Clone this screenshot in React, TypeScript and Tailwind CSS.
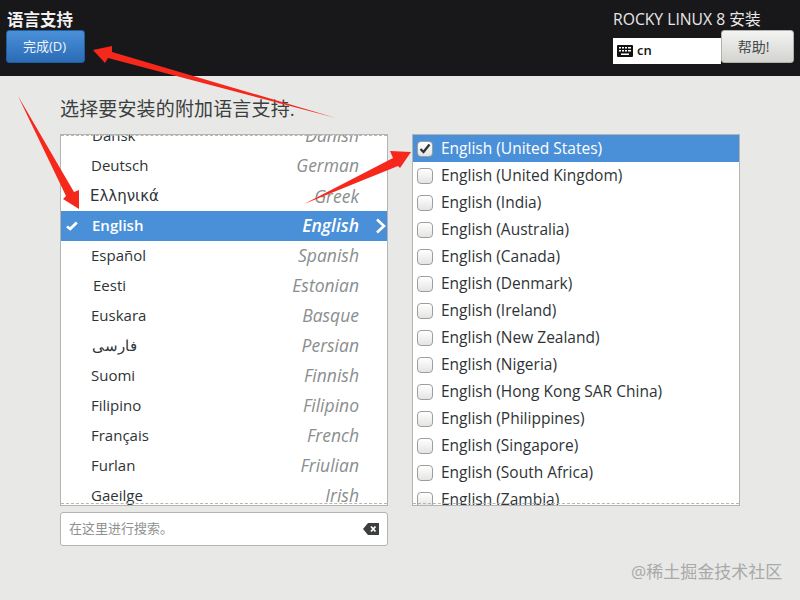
import React from "react";

const FONT = "[font-family:'Open_Sans','Noto_Sans_CJK_SC',sans-serif]";

const langs: [string, string, string][] = [
  ["Dansk", "Danish", "pl-[31px] pb-[2px]"],
  ["Deutsch", "German", "pl-[30px] pb-[2px]"],
  ["Ελληνικά", "Greek", "pl-[29px] pb-[0px] [font-family:'DejaVu_Sans',sans-serif]"],
  ["English", "English", "pl-[31px] pb-[2px]"],
  ["Español", "Spanish", "pl-[30px] pb-[2px]"],
  ["Eesti", "Estonian", "pl-[32px] pb-[2px]"],
  ["Euskara", "Basque", "pl-[30px] pb-[2px]"],
  ["فارسی", "Persian", "pl-[31px] pb-[2px]"],
  ["Suomi", "Finnish", "pl-[30px] pb-[2px]"],
  ["Filipino", "Filipino", "pl-[30px] pb-[2px]"],
  ["Français", "French", "pl-[30px] pb-[2px]"],
  ["Furlan", "Friulian", "pl-[30px] pb-[2px]"],
  ["Gaeilge", "Irish", "pl-[30px] pb-[2px]"],
];

const locales = [
  "United States",
  "United Kingdom",
  "India",
  "Australia",
  "Canada",
  "Denmark",
  "Ireland",
  "New Zealand",
  "Nigeria",
  "Hong Kong SAR China",
  "Philippines",
  "Singapore",
  "South Africa",
  "Zambia",
];

function LangRow({ name, en, cls }: { name: string; en: string; cls: string }) {
  const active = name === "English";
  return (
    <div
      className={`h-[30px] flex items-center pr-[28px] text-[15px] relative ${cls} ${
        active ? "bg-[#4a90d9] text-white font-semibold" : "text-[#2e3436]"
      }`}
    >
      {active && (
        <svg className="absolute left-[5px] top-[10px]" width="12" height="10" viewBox="0 0 12 10">
          <path d="M1 5.5 L4.2 8 L10.8 1.5" fill="none" stroke="white" strokeWidth="2.8" />
        </svg>
      )}
      <span className="flex-1">{name}</span>
      <span className={`italic text-[17.5px] [font-family:'Open_Sans',sans-serif] ${active ? "text-white" : "text-[#8a8e8e]"}`}>{en}</span>
      {active && (
        <svg className="absolute right-[1px] top-[7px]" width="11" height="16" viewBox="0 0 11 16">
          <path d="M2 1.5 L9 8 L2 14.5" fill="none" stroke="white" strokeWidth="2.6" />
        </svg>
      )}
    </div>
  );
}

function LocaleRow({ name, first }: { name: string; first: boolean }) {
  return (
    <div
      className={`h-[27px] flex items-center pl-[4px] gap-[8px] text-[15.5px] ${
        first ? "bg-[#4a90d9] text-white font-medium" : "text-[#2e3436]"
      }`}
    >
      <span className="w-[16px] h-[16px] rounded-[4px] border border-[#9c9f9f] bg-gradient-to-b from-white to-[#e4e4e2] flex items-center justify-center shrink-0">
        {first && (
          <svg width="12" height="11" viewBox="0 0 12 11">
            <path d="M1.5 6 L4.5 9 L10.5 1.5" fill="none" stroke="#2e3436" strokeWidth="2.3" />
          </svg>
        )}
      </span>
      <span>English ({name})</span>
    </div>
  );
}

function Dashes() {
  return <div className="absolute left-0 right-0 h-0 border-t border-dashed border-[#b5b5b5]" />;
}

export default function App() {
  return (
    <div className={`w-[800px] h-[600px] bg-[#e8e8e7] relative overflow-hidden flex flex-col ${FONT}`}>
      <header className="h-[76px] shrink-0 bg-[#18181b] flex justify-between pl-[6px] pr-[6px]">
        <div className="flex flex-col pt-[9px]">
          <div className="text-[#f2f2f2] font-bold text-[16.5px] leading-[21px] pl-[1px]">语言支持</div>
          <button className="w-[79px] h-[33px] pr-[2px] rounded-[3px] border border-[#215d9c] bg-gradient-to-b from-[#4a90d9] to-[#2a6cb5] text-[#eef4fb] text-[13px] flex items-center justify-center">
            完成(D)
          </button>
        </div>
        <div className="flex flex-col items-start w-[181px] pt-[9px]">
          <div className="text-[#e8e8e8] text-[15.7px] leading-[21px]">ROCKY LINUX 8 安装</div>
          <div className="flex items-start w-full">
            <div className="w-[108px] h-[26px] mt-[8px] bg-white flex items-center pl-[4px] gap-[4px]">
              <svg width="16" height="12" viewBox="0 0 16 12">
                <rect width="16" height="12" rx="1" fill="#111" />
                <g fill="#fff">
                  <rect x="2" y="2" width="2" height="1.5" />
                  <rect x="5" y="2" width="2" height="1.5" />
                  <rect x="8" y="2" width="2" height="1.5" />
                  <rect x="11" y="2" width="3" height="1.5" />
                  <rect x="2" y="5" width="2" height="1.5" />
                  <rect x="5" y="5" width="2" height="1.5" />
                  <rect x="8" y="5" width="2" height="1.5" />
                  <rect x="11" y="5" width="3" height="1.5" />
                  <rect x="4" y="8.5" width="8" height="1.5" />
                </g>
              </svg>
              <span className="text-[13px] font-semibold text-[#111]">cn</span>
            </div>
            <button className="w-[73px] h-[33px] pr-[8px] rounded-[3px] border border-[#b0b0ac] bg-gradient-to-b from-[#f4f4f3] to-[#d3d3d0] text-[#454a4b] text-[14px] flex items-center justify-center">
              帮助!
            </button>
          </div>
        </div>
      </header>

      <main className="flex-1 pl-[60px] pr-[60px] flex flex-col">
        <p className="mt-[19px] h-[28px] text-[19px] leading-[28px] tracking-[0.15px] text-[#3a3f40]">选择要安装的附加语言支持.</p>
        <div className="mt-[11px] flex gap-[24px]">
          <div className="w-[328px] flex flex-col gap-[6px]">
            <div className="relative h-[372px] bg-white border border-[#b4b4b2] overflow-hidden">
              <div className="-mt-[14px]">
                {langs.map(([n, e, c]) => (
                  <LangRow key={n} name={n} en={e} cls={c} />
                ))}
              </div>
              <div className="absolute top-0 left-0 right-0"><Dashes /></div>
              <div className="absolute bottom-[2px] left-0 right-0"><Dashes /></div>
            </div>
            <div className="h-[34px] bg-white border border-[#b4b4b2] rounded-[3px] flex items-center justify-between pl-[8px] pr-[8px]">
              <span className="text-[13px] text-[#8f9291]">在这里进行搜索。</span>
              <svg width="16" height="12" viewBox="0 0 16 12">
                <path d="M5 0 H16 V12 H5 L0 6 Z" fill="#3b3f40" />
                <path d="M8 3.5 L12.5 8.5 M12.5 3.5 L8 8.5" stroke="#fff" strokeWidth="1.8" />
              </svg>
            </div>
          </div>
          <div className="relative w-[328px] h-[372px] bg-white border border-[#b4b4b2] overflow-hidden">
            {locales.map((l, i) => (
              <LocaleRow key={l} name={l} first={i === 0} />
            ))}
            <div className="absolute bottom-[2px] left-0 right-0"><Dashes /></div>
          </div>
        </div>
      </main>

      <div className="absolute left-[631px] top-[561px] text-[17px] leading-[22px] text-[#a9a9a9]">@稀土掘金技术社区</div>

      <svg className="absolute inset-0 pointer-events-none" width="800" height="600" viewBox="0 0 800 600">
        <path d="M336 118 L112 52 L112 46 L93 50 L105 63 L108 58 Z" fill="#f5281b" />
        <path d="M18 96 L66 196 L63 199 L79 209 L79 190 L74 192 Z" fill="#f5281b" />
        <path d="M304 204 L393 158 L390 151 L411 152 L400 168 L398 166 Z" fill="#f5281b" />
      </svg>
    </div>
  );
}
